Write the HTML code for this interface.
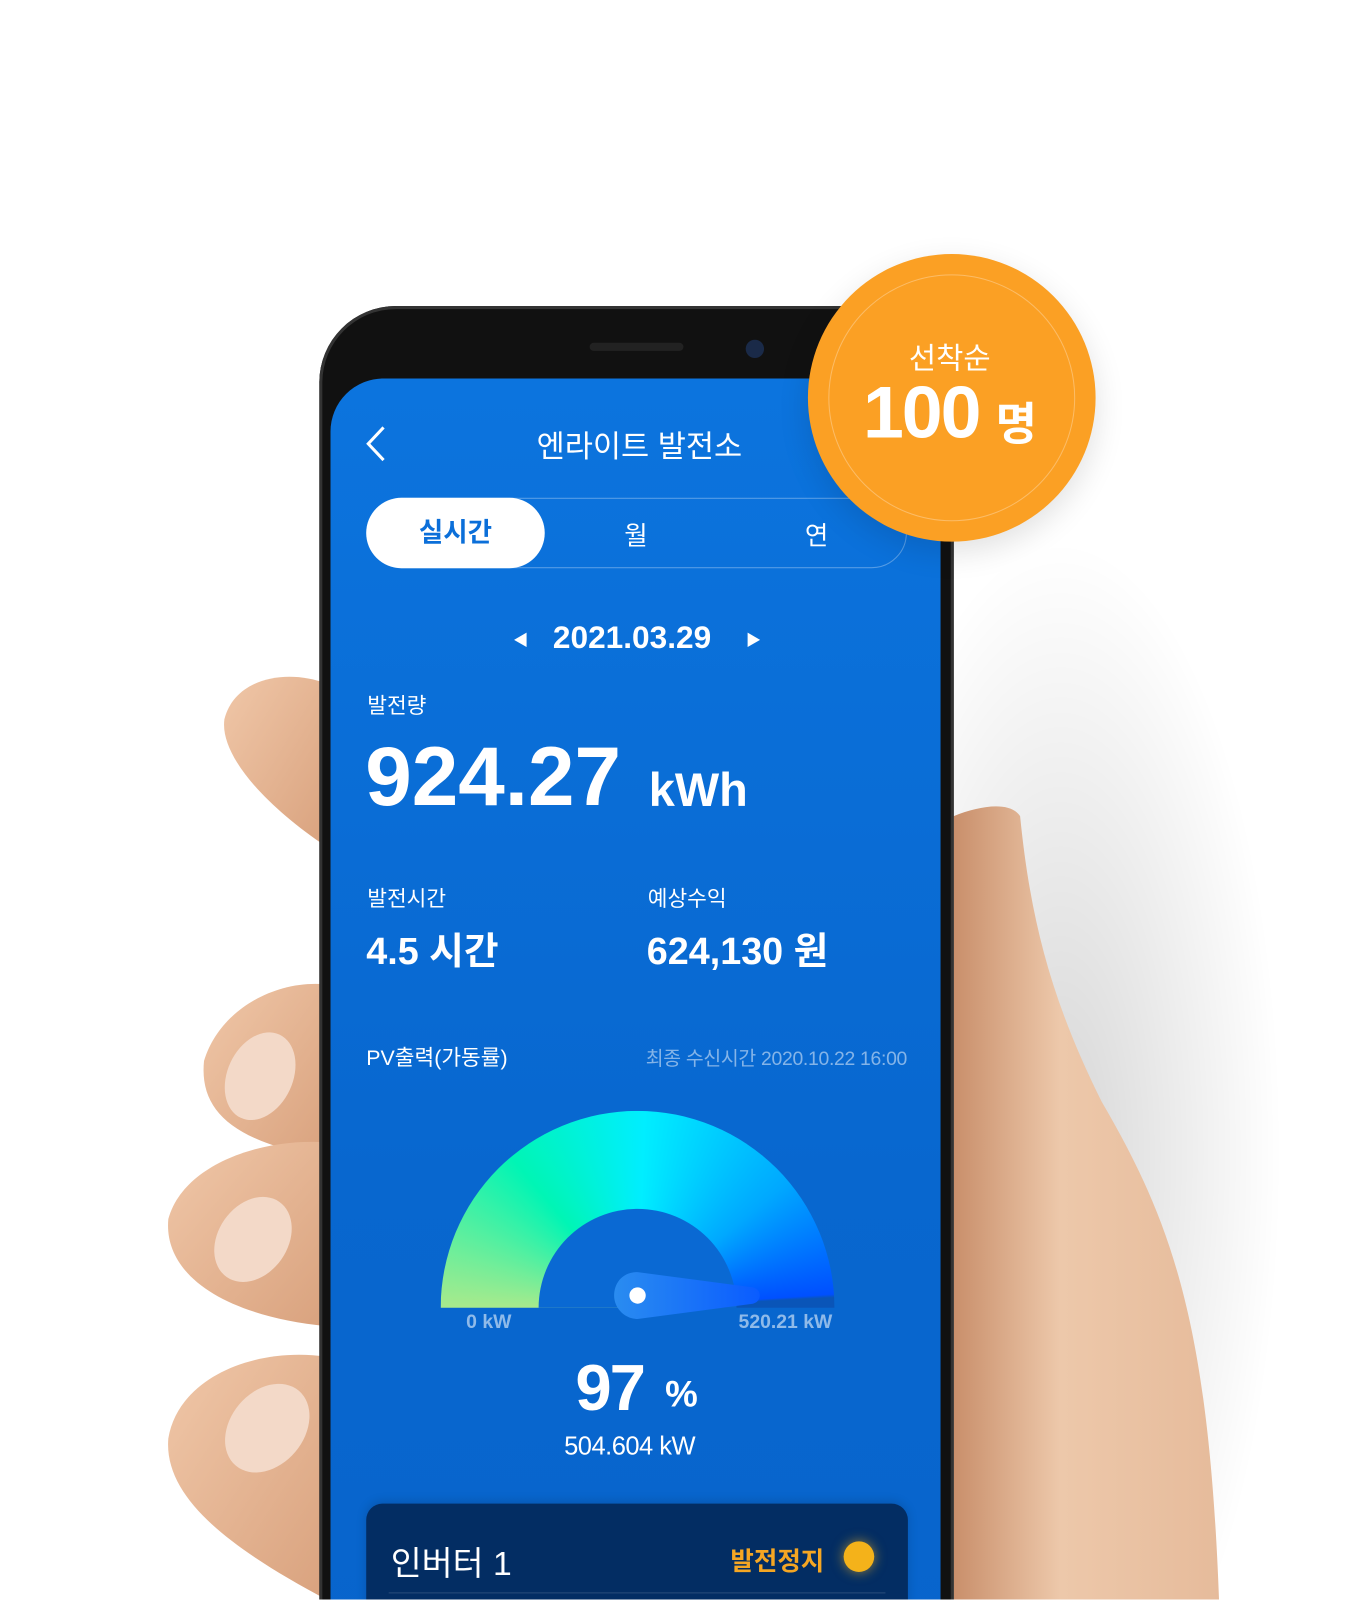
<!DOCTYPE html>
<html><head><meta charset="utf-8">
<style>
html,body{margin:0;padding:0;background:#fff;overflow:hidden}
body{width:1368px;height:1600px;position:relative}
#w{position:absolute;left:0;top:0;width:1341px;height:1568px;overflow:hidden;transform:scale(1.0201);transform-origin:0 0;font-family:"Liberation Sans","Noto Sans CJK KR",sans-serif;color:#fff}
.a{position:absolute;white-space:nowrap}
</style></head><body><div id="w">
<!-- shadow right -->
<div class="a" style="left:800px;top:380px;width:600px;height:1250px;background:radial-gradient(ellipse 45% 60% at 40% 60%,rgba(0,0,0,.16),rgba(0,0,0,0) 80%)"></div>
<!-- hands -->
<svg class="a" style="left:0;top:0" width="1341" height="1568">
<defs>
<linearGradient id="sk" x1="0" y1="0" x2="1" y2="1"><stop offset="0" stop-color="#f0c7a8"/><stop offset="1" stop-color="#d9a27e"/></linearGradient>
<linearGradient id="sk2" x1="0" y1="0" x2="1" y2="0"><stop offset="0" stop-color="#c98f6b"/><stop offset=".4" stop-color="#edc8aa"/><stop offset="1" stop-color="#e6bb9b"/></linearGradient>
</defs>
<path d="M935 800 C960 790 990 785 1000 800 C1010 900 1030 980 1080 1080 C1150 1200 1185 1300 1195 1568 L935 1568 Z" fill="url(#sk2)"/>
<path d="M320 670 C280 655 230 665 220 705 C215 740 260 790 320 830 Z" fill="url(#sk)"/>
<path d="M320 965 C270 960 215 990 200 1040 C195 1090 230 1120 320 1135 Z" fill="url(#sk)"/>
<path d="M320 1120 C260 1115 180 1140 165 1195 C160 1250 220 1290 320 1300 Z" fill="url(#sk)"/>
<path d="M320 1330 C250 1320 175 1350 165 1410 C160 1470 230 1520 320 1568 Z" fill="url(#sk)"/>
<ellipse cx="255" cy="1055" rx="32" ry="45" fill="#f3d9c8" transform="rotate(25 255 1055)"/>
<ellipse cx="248" cy="1215" rx="34" ry="45" fill="#f3d9c8" transform="rotate(35 248 1215)"/>
<ellipse cx="262" cy="1400" rx="36" ry="48" fill="#f3d9c8" transform="rotate(40 262 1400)"/>
</svg>
<!-- phone -->
<div class="a" style="left:313px;top:300px;width:622px;height:1400px;background:#111;border-radius:75px;box-shadow:inset 0 0 0 3px #333"></div>
<div class="a" style="left:578px;top:336px;width:92px;height:8px;background:#222;border-radius:4px"></div>
<div class="a" style="left:731px;top:333px;width:18px;height:18px;background:#1a2a48;border-radius:50%"></div>
<div class="a" style="left:324px;top:371px;width:598px;height:1300px;background:linear-gradient(#0c74de,#0867cf 60%,#0864cc);border-radius:52px 52px 0 0"></div>
<!-- header -->
<svg class="a" style="left:356px;top:416px" width="26" height="38"><path d="M20 3 L5 19 L20 35" stroke="#fff" stroke-width="3" fill="none"/></svg>
<div class="a" style="left:526px;top:413px;font-size:30px">엔라이트 발전소</div>
<!-- tabs -->
<div class="a" style="left:359px;top:488px;width:528px;height:67px;border:1px solid rgba(255,255,255,.3);border-radius:35px"></div>
<div class="a" style="left:359px;top:488px;width:175px;height:69px;background:#fff;border-radius:35px;color:#0b6fd9;font-size:26px;font-weight:bold;text-align:center;line-height:69px">실시간</div>
<div class="a" style="left:612px;top:506px;font-size:25px">월</div>
<div class="a" style="left:789px;top:506px;font-size:25px">연</div>
<!-- date -->
<div class="a" style="left:503px;top:617px;font-size:15px">◀</div>
<div class="a" style="left:542px;top:607px;font-size:31px;font-weight:bold">2021.03.29</div>
<div class="a" style="left:731px;top:617px;font-size:15px">▶</div>
<div class="a" style="left:360px;top:676px;font-size:21px">발전량</div>
<div class="a" style="left:358px;top:715px;font-size:82px;font-weight:bold;letter-spacing:0px">924.27</div>
<div class="a" style="left:636px;top:747px;font-size:46px;font-weight:bold">kWh</div>
<div class="a" style="left:360px;top:865px;font-size:21px">발전시간</div>
<div class="a" style="left:359px;top:902px;font-size:37px;font-weight:bold">4.5 시간</div>
<div class="a" style="left:635px;top:865px;font-size:21px">예상수익</div>
<div class="a" style="left:634px;top:902px;font-size:37px;font-weight:bold">624,130 원</div>
<div class="a" style="left:359px;top:1021px;font-size:21px">PV출력(가동률)</div>
<div class="a" style="left:633px;top:1023px;font-size:19px;color:rgba(255,255,255,.5);letter-spacing:-.3px">최종 수신시간 2020.10.22 16:00</div>
<!-- gauge -->
<div class="a" style="left:432px;top:1089px;width:386px;height:193px;overflow:hidden">
<div style="position:absolute;left:0;top:0;width:386px;height:386px;border-radius:50%;background:conic-gradient(from 270deg,#a8ea8c 0deg,#00f5b5 50deg,#00eeff 92deg,#00a8ff 140deg,#0050ff 176deg,#0a55b8 177deg,#0a55b8 180deg,#a8ea8c 180deg)"></div>
<div style="position:absolute;left:96px;top:96px;width:194px;height:194px;border-radius:50%;background:#0a69d3"></div>
</div>
<svg class="a" style="left:600px;top:1245px" width="160" height="50"><defs><linearGradient id="nd" x1="0" x2="1"><stop offset="0" stop-color="#2a8cf0"/><stop offset="1" stop-color="#0a5cff"/></linearGradient></defs><path d="M25 2 C10 2 2 13 2 25 C2 37 12 48 25 48 L138 33 C147 31 147 19 138 17 Z" fill="url(#nd)"/><circle cx="25" cy="25" r="8" fill="#fff"/></svg>
<div class="a" style="left:457px;top:1286px;font-size:19px;font-weight:bold;color:rgba(255,255,255,.55)">0 kW</div>
<div class="a" style="left:724px;top:1286px;font-size:19px;font-weight:bold;color:rgba(255,255,255,.55);letter-spacing:0">520.21 kW</div>
<div class="a" style="left:564px;top:1323px;font-size:64px;font-weight:bold;letter-spacing:-2px">97</div>
<div class="a" style="left:652px;top:1346px;font-size:36px;font-weight:bold">%</div>
<div class="a" style="left:553px;top:1404px;font-size:25px;letter-spacing:-.5px">504.604 kW</div>
<!-- card -->
<div class="a" style="left:359px;top:1474px;width:531px;height:140px;background:#032d63;border-radius:16px;box-shadow:0 -2px 10px rgba(0,0,0,.15)"></div>
<div class="a" style="left:383px;top:1506px;font-size:33px">인버터 1</div>
<div class="a" style="left:716px;top:1511px;font-size:25px;font-weight:bold;color:#f5a623">발전정지</div>
<div class="a" style="left:827px;top:1511px;width:30px;height:30px;border-radius:50%;background:#f4b21a;box-shadow:0 0 12px rgba(255,190,30,.6)"></div>
<div class="a" style="left:381px;top:1561px;width:487px;height:1px;background:rgba(255,255,255,.15)"></div>
<!-- badge -->
<div class="a" style="left:792px;top:249px;width:282px;height:282px;border-radius:50%;background:#fba024;box-shadow:0 10px 30px rgba(0,0,0,.12)"></div>
<div class="a" style="left:812px;top:269px;width:240px;height:240px;border-radius:50%;border:1px solid rgba(255,255,255,.3)"></div>
<div class="a" style="left:891px;top:328px;font-size:29px">선착순</div>
<div class="a" style="left:846px;top:364px;font-size:72px;font-weight:bold;letter-spacing:-2px">100</div>
<div class="a" style="left:976px;top:380px;font-size:44px;font-weight:bold">명</div>
</div></body></html>
